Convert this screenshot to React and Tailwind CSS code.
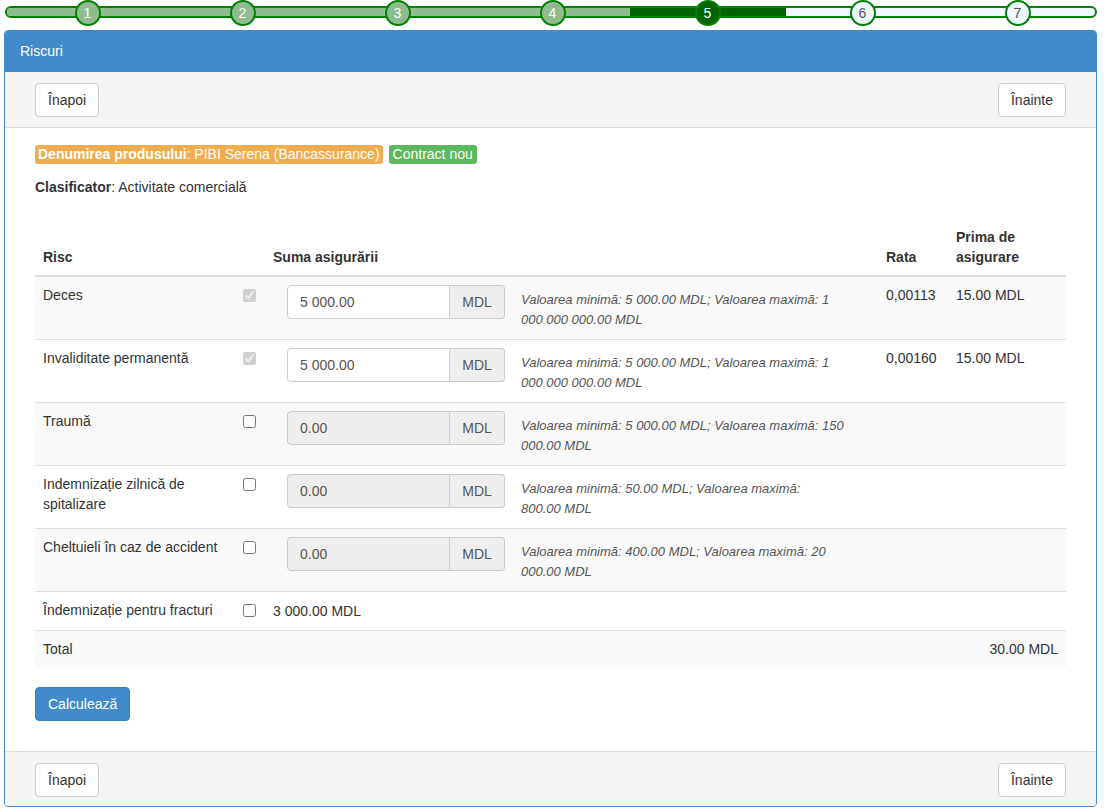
import React from 'react';

const steps = [1, 2, 3, 4, 5, 6, 7];

const risks = [
  {
    name: 'Deces',
    locked: true,
    value: '5 000.00',
    hint: ['Valoarea minimă: 5 000.00 MDL; Valoarea maximă: 1', '000 000 000.00 MDL'],
    rate: '0,00113',
    premium: '15.00 MDL',
  },
  {
    name: 'Invaliditate permanentă',
    locked: true,
    value: '5 000.00',
    hint: ['Valoarea minimă: 5 000.00 MDL; Valoarea maximă: 1', '000 000 000.00 MDL'],
    rate: '0,00160',
    premium: '15.00 MDL',
  },
  {
    name: 'Traumă',
    value: '0.00',
    hint: ['Valoarea minimă: 5 000.00 MDL; Valoarea maximă: 150', '000.00 MDL'],
  },
  {
    name: 'Indemnizație zilnică de spitalizare',
    value: '0.00',
    hint: ['Valoarea minimă: 50.00 MDL; Valoarea maximă:', '800.00 MDL'],
  },
  {
    name: 'Cheltuieli în caz de accident',
    value: '0.00',
    hint: ['Valoarea minimă: 400.00 MDL; Valoarea maximă: 20', '000.00 MDL'],
  },
];

function Stepper({ current }) {
  return (
    <div className="relative ml-[5px] w-[1092px] h-[30px] pt-[6px]">
      <div className="h-[12px] rounded-full border-2 border-[#008000] bg-[#f0f8ff] overflow-hidden flex">
        <div className="w-[623px] bg-[#8fbc8f]" />
        <div className="w-[156px] bg-[#006400]" />
      </div>
      <div className="absolute top-0 left-0 flex pl-[5px]">
        {steps.map((s) => {
          const done = s < current;
          const active = s === current;
          const cls = done
            ? 'bg-[#8fbc8f] text-white'
            : active
            ? 'bg-[#006400] text-white'
            : 'bg-[#f0f8ff] text-[#555]';
          return (
            <div key={s} className="w-[155px] flex justify-center">
              <div
                className={`w-[26px] h-[26px] rounded-full border-2 border-[#008000] flex items-center justify-center text-[14px] leading-none ${cls}`}
              >
                {s}
              </div>
            </div>
          );
        })}
      </div>
    </div>
  );
}

function NavBar({ top }) {
  return (
    <div
      className={`flex justify-between px-[30px] bg-[#f5f5f5] ${
        top ? 'pt-[11px] pb-[10px] border-b border-[#ddd]' : 'pt-[11px] pb-[9px] border-t border-[#ddd]'
      }`}
    >
      <button className="h-[34px] px-[12px] bg-white border border-[#ccc] rounded-[4px] text-[14px] text-[#333]">
        Înapoi
      </button>
      <button className="h-[34px] px-[12px] bg-white border border-[#ccc] rounded-[4px] text-[14px] text-[#333]">
        Înainte
      </button>
    </div>
  );
}

export default function App() {
  return (
    <div
      className="bg-white text-[#333] text-[14px] leading-[20px] w-[1111px] h-[812px]"
      style={{ fontFamily: '"Liberation Sans", Arial, sans-serif' }}
    >
      <Stepper current={5} />

      <div className="ml-[4px] w-[1093px] border border-[#428bca] rounded-[4px] overflow-hidden">
        <div className="bg-[#428bca] text-white px-[15px] py-[10px] border-b border-[#428bca]">Riscuri</div>

        <NavBar top />

        <div className="px-[30px] pt-[17px] pb-[30px]">
          <div className="flex gap-[6px]">
            <span className="bg-[#f0ad4e] text-white px-[3px] leading-[19px] rounded-[3px]">
              <b>Denumirea produsului</b>: PIBI Serena (Bancassurance)
            </span>
            <span className="bg-[#5cb85c] text-white px-[4px] leading-[19px] rounded-[3px]">Contract nou</span>
          </div>

          <p className="mt-[13px]">
            <b>Clasificator</b>: Activitate comercială
          </p>

          <table className="mt-[22px] w-full table-fixed border-collapse">
            <colgroup>
              <col className="w-[200px]" />
              <col className="w-[30px]" />
              <col />
              <col className="w-[70px]" />
              <col className="w-[118px]" />
            </colgroup>
            <thead>
              <tr className="text-left">
                <th className="p-2 align-bottom border-b-2 border-[#ddd]">Risc</th>
                <th className="p-2 align-bottom border-b-2 border-[#ddd]" />
                <th className="p-2 align-bottom border-b-2 border-[#ddd]">Suma asigurării</th>
                <th className="p-2 align-bottom border-b-2 border-[#ddd]">Rata</th>
                <th className="p-2 align-bottom border-b-2 border-[#ddd]">Prima de asigurare</th>
              </tr>
            </thead>
            <tbody>
              {risks.map((r, i) => (
                <tr key={r.name} className={i % 2 === 0 ? 'bg-[#f9f9f9]' : 'bg-white'}>
                  <td className="p-2 align-top border-t border-[#ddd]">{r.name}</td>
                  <td className="p-2 align-top border-t border-[#ddd]">
                    <input
                      type="checkbox"
                      className="mt-[4px] w-[13px] h-[13px]"
                      checked={!!r.locked}
                      disabled={!!r.locked}
                      readOnly
                    />
                  </td>
                  <td className="p-2 align-top border-t border-[#ddd]">
                    <div className="flex pl-[14px]">
                      <div className="flex w-[218px] h-[34px] shrink-0">
                        <div
                          className={`flex-1 flex items-center px-[12px] border border-[#ccc] rounded-l-[4px] text-[#555] ${
                            r.locked ? 'bg-white' : 'bg-[#eee]'
                          }`}
                        >
                          {r.value}
                        </div>
                        <div className="w-[55px] flex items-center justify-center bg-[#eee] border border-l-0 border-[#ccc] rounded-r-[4px] text-[#555]">
                          MDL
                        </div>
                      </div>
                      <div className="ml-[16px] pt-[5px] pb-[1px] text-[13px] leading-[20px] italic text-[#555]">
                        {r.hint[0]}
                        <br />
                        {r.hint[1]}
                      </div>
                    </div>
                  </td>
                  <td className="p-2 align-top border-t border-[#ddd]">{r.rate}</td>
                  <td className="p-2 align-top border-t border-[#ddd]">{r.premium}</td>
                </tr>
              ))}
              <tr className="bg-white">
                <td className="p-2 align-top border-t border-[#ddd]">Îndemnizație pentru fracturi</td>
                <td className="p-2 align-top border-t border-[#ddd]">
                  <input type="checkbox" className="mt-[4px] w-[13px] h-[13px]" readOnly />
                </td>
                <td className="p-2 align-top border-t border-[#ddd]">
                  <div className="py-[1px]">3 000.00 MDL</div>
                </td>
                <td className="p-2 align-top border-t border-[#ddd]" />
                <td className="p-2 align-top border-t border-[#ddd]" />
              </tr>
              <tr className="bg-[#f9f9f9]">
                <td className="p-2 align-top border-t border-[#ddd]" colSpan={4}>
                  Total
                </td>
                <td className="p-2 align-top border-t border-[#ddd] text-right">30.00 MDL</td>
              </tr>
            </tbody>
          </table>

          <button className="mt-[20px] h-[34px] px-[12px] bg-[#428bca] border border-[#357ebd] rounded-[4px] text-white">
            Calculează
          </button>
        </div>

        <NavBar />
      </div>
    </div>
  );
}
